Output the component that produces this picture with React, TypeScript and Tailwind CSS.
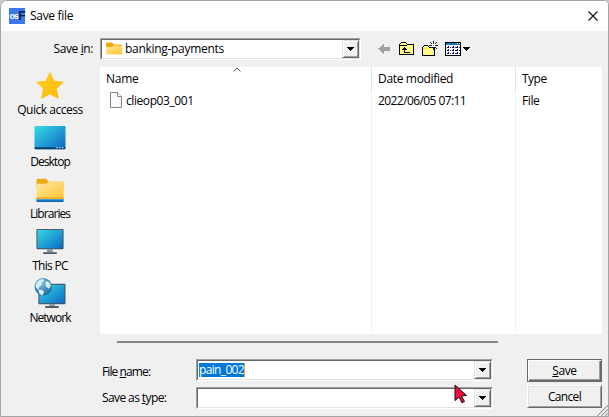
import React from "react";

const star = (
  <svg width="32" height="32" viewBox="0 0 32 32">
    <defs>
      <linearGradient id="st" x1="0" y1="0" x2="1" y2="1">
        <stop offset="0" stopColor="#ffd42a" />
        <stop offset="1" stopColor="#ffb400" />
      </linearGradient>
    </defs>
    <path d="M16 2.5 L20 11.5 L29.6 12.6 L22.6 19.4 L24.6 29.2 L16 24.6 L7.4 29.2 L9.4 19.4 L2.4 12.6 L12 11.5 Z" fill="url(#st)" stroke="#ffc010" strokeWidth="1" strokeLinejoin="round" />
  </svg>
);

const desktop = (
  <svg width="32" height="32" viewBox="0 0 32 32">
    <defs>
      <linearGradient id="dk" x1="0" y1="0" x2="1" y2="1">
        <stop offset="0" stopColor="#36dbe4" />
        <stop offset="1" stopColor="#0c66c2" />
      </linearGradient>
    </defs>
    <rect y="4" width="32" height="24" rx="1.5" fill="url(#dk)" />
    <path d="M0 26h32v1q0 1-1 1H1q-1 0-1-1z" fill="#0b3f70" />
    <path d="M22 26h2v1h-2zM25 26h2v1h-2zM28 26h2v1h-2z" fill="#b9e6f5" />
  </svg>
);

const libraries = (
  <svg width="32" height="32" viewBox="0 0 32 32">
    <defs>
      <linearGradient id="lb" x1="0" y1="0" x2="1" y2="1">
        <stop offset="0" stopColor="#ffe8a3" />
        <stop offset="1" stopColor="#ffc431" />
      </linearGradient>
    </defs>
    <path d="M2 6q0-1 1-1h9l3 3h14q1 0 1 1v6H2z" fill="#efaa13" />
    <path d="M2 10h10l3-2h14q1 0 1 1v17H2z" fill="url(#lb)" />
    <path d="M2 24h28v2H2z" fill="#f0ae20" />
    <path d="M2 26h28v3H2z" fill="#0869bd" />
    <path d="M2 26h28v1H2z" fill="#47a7dc" />
  </svg>
);

const pc = (
  <svg width="32" height="32" viewBox="0 0 32 32">
    <defs>
      <linearGradient id="pc" x1="0" y1="0" x2="1" y2="1">
        <stop offset="0" stopColor="#35d8e3" />
        <stop offset="1" stopColor="#0b6bc6" />
      </linearGradient>
    </defs>
    <rect x="2" y="3" width="28" height="21" rx="1" fill="#46525c" />
    <rect x="3" y="4" width="26" height="19" fill="url(#pc)" />
    <path d="M13 24h6v3h-6z" fill="#8a959d" />
    <path d="M9 27h14v2H9z" fill="#4d5962" />
  </svg>
);

const network = (
  <svg width="32" height="32" viewBox="0 0 32 32">
    <defs>
      <linearGradient id="nw" x1="0" y1="0" x2="1" y2="1">
        <stop offset="0" stopColor="#35d8e3" />
        <stop offset="1" stopColor="#0b6bc6" />
      </linearGradient>
      <radialGradient id="gl" cx=".4" cy=".3" r=".7">
        <stop offset="0" stopColor="#7ac2e2" />
        <stop offset="1" stopColor="#246a98" />
      </radialGradient>
    </defs>
    <rect x="4" y="6" width="28" height="21" rx="1" fill="#46525c" />
    <rect x="5" y="7" width="26" height="19" fill="url(#nw)" />
    <path d="M15 27h6v2h-6z" fill="#8a959d" />
    <path d="M11 29h14v2H11z" fill="#4d5962" />
    <circle cx="9" cy="9" r="9" fill="url(#gl)" />
    <path d="M2 5l3-3 4-1 1 2-3 2 1 2-3 2-1 3-3-3zM12 3l3 1 2 4-2 3-3-2-1-3zM4 12l4 0 2 3-2 3-3-2z" fill="#d6edf5" />
  </svg>
);

const places = [
  { name: "Quick access", icon: star, cls: "tracking-[-0.48px]" },
  { name: "Desktop", icon: desktop, cls: "tracking-[-0.95px]" },
  { name: "Libraries", icon: libraries, cls: "tracking-[-0.95px]" },
  { name: "This PC", icon: pc, cls: "tracking-[-0.7px]" },
  { name: "Network", icon: network, cls: "tracking-[-0.95px]" },
];

function DropButton() {
  return (
    <span className="flex h-[18px] w-[17px] shrink-0 items-center justify-center border border-t-[#e3e3e3] border-l-[#e3e3e3] border-r-[#696969] border-b-[#696969] bg-[#f0f0f0] shadow-[inset_1px_1px_#fff,inset_-1px_-1px_#a0a0a0]">
      <svg width="7" height="4" viewBox="0 0 7 4" shapeRendering="crispEdges">
        <path d="M0 0h7v1H0zM1 1h5v1H1zM2 2h3v1H2zM3 3h1v1H3z" />
      </svg>
    </span>
  );
}

function Combo({ className, children }: { className: string; children?: React.ReactNode }) {
  return (
    <div className={"flex border border-t-[#a0a0a0] border-l-[#a0a0a0] border-r-white border-b-white " + className}>
      <div className="flex min-w-0 flex-1 items-center justify-between border border-t-[#696969] border-l-[#696969] border-r-[#e3e3e3] border-b-[#e3e3e3] bg-white">
        <div className="flex items-center">{children}</div>
        <DropButton />
      </div>
    </div>
  );
}

function UpIcon() {
  return (
    <svg className="ml-2" width="16" height="16" viewBox="0 0 16 16" shapeRendering="crispEdges">
      <path d="M2 1h5v1h1v1h7v11H0V3h1V2h1z" fill="#000" />
      <path d="M2 2h5v1h1v1h6v9H1V3h1z" fill="#fffb86" />
      <path d="M1 4h7v1H1z" fill="#000" />
      <path d="M5 6h1v1h1v1h1v1H6v2h5v1H5V9H3V8h1V7h1z" fill="#000" />
    </svg>
  );
}

function NewFolderIcon() {
  return (
    <svg className="ml-[7px]" width="16" height="16" viewBox="0 0 16 16" shapeRendering="crispEdges">
      <path d="M2 4h4v1h1v1h6v9H0V6h1V5h1z" fill="#000" />
      <path d="M2 5h4v1h1v1h5v7H1V6h1z" fill="#fffb86" />
      <path d="M1 7h6v1H1z" fill="#f6e94a" />
      <path d="M10 3h3v3h-3z" fill="#fff" />
      <path d="M11 0h1v3h-1zM8 1h1v1H8zM9 2h1v1H9zM14 1h1v1h-1zM13 2h1v1h-1zM7 4h3v1H7zM13 4h3v1h-3zM9 6h1v1H9zM13 6h1v1h-1zM14 7h1v1h-1zM11 6h1v3h-1z" fill="#222" />
      <path d="M11 4h1v1h-1z" fill="#777" />
    </svg>
  );
}

function ViewIcon() {
  return (
    <svg className="ml-[7px]" width="25" height="16" viewBox="0 0 25 16" shapeRendering="crispEdges">
      <path d="M0 1h16v14H0z" fill="#000" />
      <path d="M1 2h14v2H1z" fill="#1976bd" />
      <path d="M12 2h1v1h-1zM14 2h1v1h-1z" fill="#fff" />
      <path d="M1 4h14v10H1z" fill="#fff" />
      <path d="M2 6h2v1H2zM7 6h2v1H7zM11 6h2v1h-2zM2 9h2v1H2zM7 9h2v1H7zM11 9h2v1h-2zM2 12h2v1H2zM7 12h2v1H7zM11 12h2v1h-2zM3 5h1v1H3zM8 5h1v1H8zM12 5h1v1h-1zM3 8h1v1H3zM8 8h1v1H8zM12 8h1v1h-1zM3 11h1v1H3zM8 11h1v1H8zM12 11h1v1h-1z" fill="#000080" />
      <path d="M5 6h1v1H5zM10 6h1v1h-1zM14 6h1v1h-1zM5 9h1v1H5zM10 9h1v1h-1zM14 9h1v1h-1zM5 12h1v1H5zM10 12h1v1h-1zM14 12h1v1h-1z" fill="#333" />
      <path d="M18 6h7v1h-7zM19 7h5v1h-5zM20 8h3v1h-3zM21 9h1v1h-1z" fill="#000" />
    </svg>
  );
}

export default function App() {
  return (
    <div className="relative h-[417px] w-[609px] overflow-hidden bg-[#c9c9d2] font-['Open_Sans','Noto_Sans',sans-serif] text-[12px] leading-4 tracking-[-0.4px] text-black">
      <div className="flex h-full flex-col overflow-hidden rounded-tl-[7px] rounded-tr-[5px] border border-[#a5a5a8] bg-[#f0f0f0]">
        <header className="flex h-[30px] shrink-0 items-center justify-between bg-white pr-[10px] pl-2">
          <div className="flex items-center">
            <span className="flex h-4 w-4 items-center justify-center bg-[#3c78e8] font-['Liberation_Sans',sans-serif] leading-4 font-bold tracking-[-0.9px]">
              <span className="text-[9px] text-white">os</span>
              <span className="text-[12px] text-[#101c48]">F</span>
            </span>
            <span className="ml-[5px] tracking-[-0.3px]">Save file</span>
          </div>
          <svg width="10" height="10" viewBox="0 0 10 10">
            <path d="M.5.5l9 9M9.500.5l-9 9" stroke="#111" strokeWidth="1.1" />
          </svg>
        </header>

        <div className="flex h-9 shrink-0 pt-[7px]">
          <span className="w-[99px] pt-[3px] pr-[7px] text-right">
            Save <u>i</u>n:
          </span>
          <Combo className="h-[22px] w-[261px]">
            <svg className="ml-1" width="16" height="14" viewBox="0 0 16 14">
              <defs>
                <linearGradient id="fd" x1="0" y1="0" x2="1" y2="1">
                  <stop offset="0" stopColor="#ffe59a" />
                  <stop offset="1" stopColor="#ffc534" />
                </linearGradient>
              </defs>
              <path d="M0 1.500q0-1 1-1h5l2 2h7q1 0 1 1V7H0z" fill="#efa90f" />
              <path d="M0 5h6l2-1.500h7q1 0 1 1v7q0 1-1 1H1q-1 0-1-1z" fill="url(#fd)" />
            </svg>
            <span className="ml-[3px] tracking-[-0.3px]">banking-payments</span>
          </Combo>
          <div className="flex h-[22px] items-center pl-[17px]">
            <svg width="13" height="12" viewBox="0 0 13 12" shapeRendering="crispEdges">
              <path d="M13 9v1H6v2H5v-1H4v-1h9z" fill="#fff" />
              <path d="M5 1h1v3h6v4H6v3H5v-1H4V9H3V8H2V7H1V6H0V5h2V4h1V3h1V2h1z" fill="#a0a0a0" />
            </svg>
            <UpIcon />
            <NewFolderIcon />
            <ViewIcon />
          </div>
        </div>

        <div className="flex h-[267px] shrink-0">
          <nav className="flex w-[99px] flex-col gap-1 pt-[3px] pr-[1px]">
            {places.map((p) => (
              <div key={p.name} className="flex h-12 flex-col items-center">
                {p.icon}
                <span className={"pt-px " + p.cls}>{p.name}</span>
              </div>
            ))}
          </nav>
          <main className="flex w-[502px] bg-white">
            <section className="w-[271px] pl-1.5">
              <svg className="ml-[127px] block" width="8" height="5" viewBox="0 0 8 5">
                <path d="M.5 4.500L4 1l3.500 3.500" fill="none" stroke="#555" />
              </svg>
              <div className="-mt-px h-[22px] tracking-[-0.25px]">Name</div>
              <div className="flex">
                <svg className="-mt-px ml-1" width="12" height="16" viewBox="0 0 12 16">
                  <path d="M.5.5h7l4 4v11H.5z" fill="#fafafa" stroke="#858585" />
                  <path d="M7.500.5v4h4" fill="#fff" stroke="#858585" />
                </svg>
                <span className="ml-1 tracking-[-0.42px]">clieop03_001</span>
              </div>
            </section>
            <div className="flex w-px flex-col">
              <span className="h-6 bg-[#e2e2e2]" />
              <span className="flex-1 bg-[#edf3fb]" />
            </div>
            <section className="w-[143px] pt-1 pl-1.5">
              <div className="h-[22px] tracking-[-0.33px]">Date modified</div>
              <div className="tracking-[-0.58px]">2022/06/05 07:11</div>
            </section>
            <div className="flex w-px flex-col">
              <span className="h-6 bg-[#e2e2e2]" />
              <span className="flex-1 bg-[#edf3fb]" />
            </div>
            <section className="pt-1 pl-1.5">
              <div className="h-[22px] tracking-[-0.5px]">Type</div>
              <div>File</div>
            </section>
          </main>
        </div>

        <div className="mt-[7px] ml-[116px] h-[2px] w-[381px] shrink-0 bg-[#858585]" />

        <footer className="mt-4 flex">
          <div className="w-[195px] pl-[101px]">
            <div className="h-[26px] pt-[5px] tracking-[-0.9px]">
              File <u>n</u>ame:
            </div>
            <div className="pt-[5px] tracking-[-0.6px]">
              Save as <u>t</u>ype:
            </div>
          </div>
          <div className="flex flex-col gap-[6px]">
            <Combo className="h-[22px] w-[297px]">
              <span className="ml-px h-[14px] border-r border-[#e79a55] bg-[#0078d7] leading-[14px] tracking-[-0.65px] text-white">pain_002</span>
            </Combo>
            <Combo className="h-[22px] w-[297px]" />
          </div>
          <div className="ml-[34px] flex flex-col gap-[3px]">
            <button className="flex h-[23px] w-[75px] items-center justify-center border border-[#696969] bg-[#f0f0f0] tracking-[-0.4px] shadow-[inset_1px_1px_#fff,inset_-1px_-1px_#696969,inset_-2px_-2px_#a0a0a0]">
              <span>
                <u>S</u>ave
              </span>
            </button>
            <button className="flex h-[23px] w-[75px] items-center justify-center border border-t-white border-l-white border-r-[#696969] border-b-[#696969] bg-[#f0f0f0] tracking-[-0.65px] shadow-[inset_1px_1px_#e3e3e3,inset_-1px_-1px_#a0a0a0]">
              Cancel
            </button>
          </div>
        </footer>
      </div>

      <svg className="absolute right-px bottom-px" width="12" height="12" viewBox="0 0 12 12">
        <path d="M1 12L12 1M5 12l7-7M9 12l3-3" stroke="#999" strokeWidth="1.300" />
        <path d="M0 12L12 0M4 12l8-8M8 12l4-4" stroke="#fff" strokeWidth=".7" />
      </svg>
      <svg className="absolute top-[384px] left-[454px]" width="14" height="20" viewBox="0 0 14 20">
        <path d="M1 1l11.500 10.500-5 .5 3 5.500-2.600 1.200-2.700-5.500L1 16.500z" fill="#f5083c" stroke="#111" strokeWidth="1" />
      </svg>
    </div>
  );
}
